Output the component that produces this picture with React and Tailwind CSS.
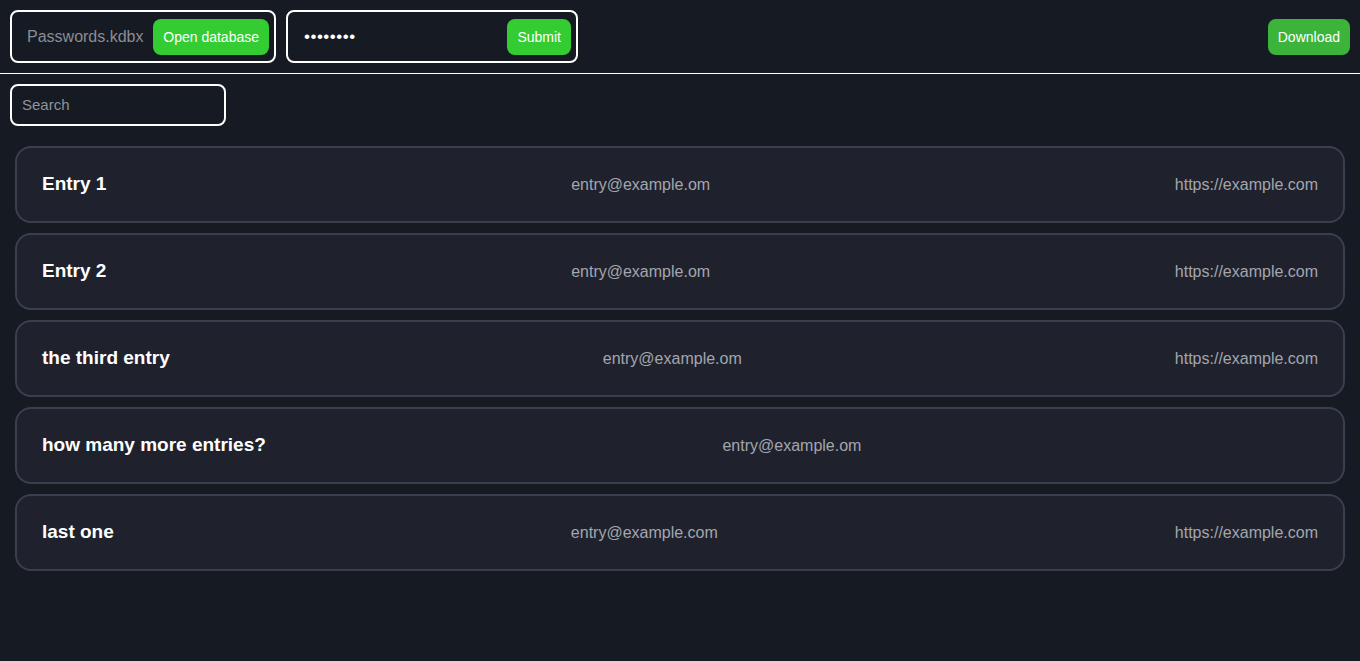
import React from "react";

const entries = [
  { name: "Entry 1", email: "entry@example.om", url: "https://example.com" },
  { name: "Entry 2", email: "entry@example.om", url: "https://example.com" },
  { name: "the third entry", email: "entry@example.om", url: "https://example.com" },
  { name: "how many more entries?", email: "entry@example.om", url: "" },
  { name: "last one", email: "entry@example.com", url: "https://example.com" },
];

export default function App() {
  return (
    <div
      className="min-h-screen bg-[#161a22] text-white"
      style={{ fontFamily: '"Liberation Sans", Arial, sans-serif' }}
    >
      <header className="flex items-center justify-between h-[74px] border-b border-white px-2.5">
        <div className="flex items-center gap-2.5">
          <div className="flex items-center h-[53px] w-[266px] border-2 border-white rounded-lg pl-[15px] pr-[5px]">
            <span className="text-base text-[#8a8d95] flex-1">Passwords.kdbx</span>
            <button className="h-9 px-2.5 rounded-lg bg-[#33cc33] text-white text-sm">
              Open database
            </button>
          </div>
          <div className="flex items-center h-[53px] w-[292px] border-2 border-white rounded-lg pl-4 pr-[5px]">
            <span className="text-[17px] text-white flex-1 tracking-[0.5px]">••••••••</span>
            <button className="h-9 px-2.5 rounded-lg bg-[#33cc33] text-white text-sm">
              Submit
            </button>
          </div>
        </div>
        <button className="h-9 px-2.5 rounded-lg bg-[#3cb43c] text-white text-sm">
          Download
        </button>
      </header>
      <div className="px-2.5 pt-2.5">
        <div className="flex items-center w-[216px] h-[42px] border-2 border-white rounded-lg px-2.5">
          <span className="text-[15px] text-[#8f939b]">Search</span>
        </div>
      </div>
      <div className="flex flex-col gap-2.5 px-[15px] pt-5">
        {entries.map((e, i) => (
          <div
            key={i}
            className="flex items-center justify-between h-[77px] pl-[25px] pr-[25px] rounded-2xl border-2 border-[#3a3e4f] bg-[#1f222d]"
          >
            <span className="text-[19px] font-bold text-white">{e.name}</span>
            <span className="text-base text-[#a3a6ae]">{e.email}</span>
            <span className="text-base text-[#a3a6ae]">{e.url}</span>
          </div>
        ))}
      </div>
    </div>
  );
}
